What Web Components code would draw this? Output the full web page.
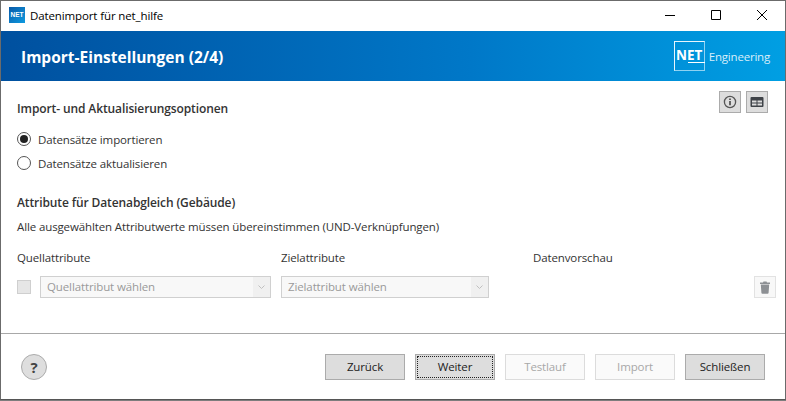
<!DOCTYPE html>
<html lang="de">
<head>
<meta charset="utf-8">
<title>Datenimport</title>
<style>
  html, body { margin: 0; height: 100%; background: #7d7d7d; }
  body { font: 11.5px "Open Sans", "Noto Sans", sans-serif; letter-spacing: -0.12px; color: #333; overflow: hidden; }
</style>
</head>
<body>
<import-window>
  <title-bar slot="titlebar">Datenimport für net_hilfe</title-bar>
  <banner-header slot="banner">Import-Einstellungen (2/4)</banner-header>

  <section-title slot="content" top="20">
    Import- und Aktualisierungsoptionen
    <tool-button slot="tools" icon="info"></tool-button>
    <tool-button slot="tools" icon="table"></tool-button>
  </section-title>
  <radio-option slot="content" checked style="margin-top:10px">Datensätze importieren</radio-option>
  <radio-option slot="content">Datensätze aktualisieren</radio-option>

  <section-title slot="content" top="20">Attribute für Datenabgleich (Gebäude)</section-title>
  <plain-line slot="content">Alle ausgewählten Attributwerte müssen übereinstimmen (UND-Verknüpfungen)</plain-line>
  <mapping-table slot="content"></mapping-table>

  <help-button slot="help"></help-button>
  <push-button slot="buttons">Zurück</push-button>
  <push-button slot="buttons" focused>Weiter</push-button>
  <push-button slot="buttons" disabled>Testlauf</push-button>
  <push-button slot="buttons" disabled>Import</push-button>
  <push-button slot="buttons">Schließen</push-button>
</import-window>

<script>
const ICONS = {
  info: `<svg width="14" height="14" viewBox="0 0 14 14" fill="none"><circle cx="7" cy="7" r="5.6" stroke="#555" stroke-width="1.3"/><path d="M7 6v4.2" stroke="#444" stroke-width="1.6"/><path d="M7 3.6v1.4" stroke="#444" stroke-width="1.6"/></svg>`,
  table: `<svg width="14" height="12" viewBox="0 0 14 12"><path fill="#3f4348" fill-rule="evenodd" d="M1.5 1h11a1 1 0 0 1 1 1v8a1 1 0 0 1-1 1h-11a1 1 0 0 1-1-1V2a1 1 0 0 1 1-1zM2 4.5v2h4.5v-2zm5.5 0v2H12v-2zM2 7.5v2h4.5v-2zm5.5 0v2H12v-2z"/></svg>`,
  trash: `<svg width="12" height="13" viewBox="0 0 12 13"><path fill="#8d9094" d="M1 1.6h3L4.5.6h3l.5 1h3v1.3H1zM1.8 3.6h8.4l-.6 8.2a1 1 0 0 1-1 .9H3.4a1 1 0 0 1-1-.9z"/></svg>`,
  chevron: `<svg width="7" height="4" viewBox="0 0 7 4" fill="none"><path d="M.5.5l3 3 3-3" stroke="#c0c0c0"/></svg>`,
};

class ImportWindow extends HTMLElement {
  constructor() {
    super();
    this.attachShadow({ mode: "open" }).innerHTML = `
      <style>
        :host {
          display: flex;
          flex-direction: column;
          box-sizing: border-box;
          width: 786px;
          height: 400px;
          border: 1px solid #6b6b6b;
          border-bottom: 1px solid #555;
          background: #fff;
        }
        .content { flex: 1; padding: 0 17px 0 16px; min-height: 0; }
        .footer {
          display: flex;
          align-items: center;
          justify-content: space-between;
          height: 66px;
          border-top: 1px solid #a8a8a8;
          padding: 0 20px;
          box-sizing: border-box;
        }
        .buttons { display: flex; gap: 10px; }
      </style>
      <slot name="titlebar"></slot>
      <slot name="banner"></slot>
      <div class="content"><slot name="content"></slot></div>
      <div class="footer">
        <slot name="help"></slot>
        <div class="buttons"><slot name="buttons"></slot></div>
      </div>`;
  }
}

class TitleBar extends HTMLElement {
  constructor() {
    super();
    this.attachShadow({ mode: "open" }).innerHTML = `
      <style>
        :host {
          display: flex;
          align-items: center;
          box-sizing: border-box;
          height: 30px;
          padding-bottom: 2px;
          color: #000;
        }
        .logo {
          width: 16px; height: 16px;
          margin: 0 5px 0 8px;
          background: linear-gradient(135deg, #0a5aa8, #0d9ae0);
          color: #fff;
          font: bold 6.5px/16px "Liberation Sans", sans-serif;
          text-align: center;
          letter-spacing: 0;
        }
        .text { flex: 1; }
        .ctl { width: 46px; display: flex; align-items: center; justify-content: center; }
      </style>
      <span class="logo">NET</span>
      <span class="text"><slot></slot></span>
      <span class="ctl"><svg width="10" height="10" viewBox="0 0 10 10"><path d="M0 5.5h10" stroke="#000"/></svg></span>
      <span class="ctl"><svg width="10" height="10" viewBox="0 0 10 10"><path d="M.5.5h9v9h-9z" fill="none" stroke="#000"/></svg></span>
      <span class="ctl"><svg width="10" height="10" viewBox="0 0 10 10"><path d="M0 0l10 10M10 0L0 10" stroke="#000" stroke-width="1"/></svg></span>`;
  }
}

class BannerHeader extends HTMLElement {
  constructor() {
    super();
    this.attachShadow({ mode: "open" }).innerHTML = `
      <style>
        :host {
          display: flex;
          align-items: center;
          justify-content: space-between;
          height: 50px;
          padding: 0 15px 0 20px;
          color: #fff;
          background: linear-gradient(90deg, #00509f 0%, #0078c8 60%, #009fe3 100%);
        }
        .title { font-size: 15.5px; font-weight: 700; letter-spacing: 0; padding-top: 1px; }
        .brand { display: flex; align-items: center; gap: 4px; }
        .box {
          position: relative;
          box-sizing: border-box;
          width: 31px; height: 30px;
          border: 1px solid;
          border-color: #e8f5fc #8fd2f2 #8fd2f2 #e8f5fc;
          font: 700 13.5px/27px "Open Sans", sans-serif;
          letter-spacing: 0;
          text-align: center;
        }
        .box::after {
          content: "";
          position: absolute;
          right: -1px; bottom: 7px;
          width: 17px; height: 1px;
          background: #fff;
        }
        .eng { color: #d8eefa; letter-spacing: -0.2px; }
      </style>
      <span class="title"><slot></slot></span>
      <span class="brand"><span class="box">NET</span><span class="eng">Engineering</span></span>`;
  }
}

class SectionTitle extends HTMLElement {
  constructor() {
    super();
    this.attachShadow({ mode: "open" }).innerHTML = `
      <style>
        :host {
          display: block;
          position: relative;
          font-size: 12px;
          font-weight: 600;
          letter-spacing: -0.11px;
          line-height: 16px;
          color: #333;
        }
        .tools { position: absolute; right: 0; top: 10px; display: flex; gap: 5px; }
      </style>
      <slot></slot>
      <div class="tools"><slot name="tools"></slot></div>`;
  }
  connectedCallback() {
    this.style.paddingTop = this.getAttribute("top") + "px";
  }
}

class ToolButton extends HTMLElement {
  constructor() {
    super();
    this.attachShadow({ mode: "open" }).innerHTML = `
      <style>
        :host {
          display: flex;
          align-items: center;
          justify-content: center;
          box-sizing: border-box;
          width: 22px; height: 22px;
          background: #dddddd;
          border: 1px solid #ababab;
        }
        :host([ghost]) { background: #f8f8f8; border-color: #e2e2e2; }
      </style>
      <span id="i" style="display:flex"></span>`;
  }
  connectedCallback() {
    this.shadowRoot.getElementById("i").innerHTML = ICONS[this.getAttribute("icon")];
  }
}

class RadioOption extends HTMLElement {
  constructor() {
    super();
    this.attachShadow({ mode: "open" }).innerHTML = `
      <style>
        :host {
          display: flex;
          align-items: center;
          gap: 7px;
          height: 24px;
          color: #333;
        }
        .dot {
          box-sizing: border-box;
          width: 14px; height: 14px;
          border: 1px solid #555;
          border-radius: 50%;
          display: flex; align-items: center; justify-content: center;
        }
        :host([checked]) .dot::after {
          content: "";
          width: 8px; height: 8px;
          border-radius: 50%;
          background: #222;
        }
      </style>
      <span class="dot"></span><slot></slot>`;
  }
}

class PlainLine extends HTMLElement {
  constructor() {
    super();
    this.attachShadow({ mode: "open" }).innerHTML = `
      <style>:host { display: block; line-height: 16px; margin-top: 8px; color: #333; }</style>
      <slot></slot>`;
  }
}

class SelectBox extends HTMLElement {
  constructor() {
    super();
    this.attachShadow({ mode: "open" }).innerHTML = `
      <style>
        :host {
          display: flex;
          box-sizing: border-box;
          height: 22px;
          border: 1px solid #d0d0d0;
          background: #f8f8f8;
          color: #9a9a9a;
          line-height: 20px;
        }
        .v { flex: 1; padding-left: 6px; }
        .c { width: 17px; background: #f0f0f0; display: flex; align-items: center; justify-content: center; }
      </style>
      <span class="v"><slot></slot></span>
      <span class="c">${ICONS.chevron}</span>`;
  }
}

class MappingTable extends HTMLElement {
  constructor() {
    super();
    this.attachShadow({ mode: "open" }).innerHTML = `
      <style>
        :host {
          display: grid;
          grid-template-columns: 23px 241px 208px 1fr 22px;
          margin-top: 15px;
          margin-right: -8px;
          line-height: 16px;
          color: #333;
        }
        .h1 { grid-column: 1 / 3; }
        .h3 { grid-column: 4 / 6; padding-left: 44px; }
        .r { margin-top: 10px; display: flex; align-items: center; }
        .check { box-sizing: border-box; width: 14px; height: 14px; background: #e6e6e6; border: 1px solid #cfcfcf; }
      </style>
      <span class="h1">Quellattribute</span>
      <span>Zielattribute</span>
      <span class="h3">Datenvorschau</span>
      <span class="r"><span class="check"></span></span>
      <span class="r"><select-box style="width:231px">Quellattribut wählen</select-box></span>
      <span class="r"><select-box style="width:208px">Zielattribut wählen</select-box></span>
      <span class="r"></span>
      <span class="r"><tool-button ghost icon="trash"></tool-button></span>`;
  }
}

class HelpButton extends HTMLElement {
  constructor() {
    super();
    this.attachShadow({ mode: "open" }).innerHTML = `
      <style>
        :host {
          display: flex;
          align-items: center;
          justify-content: center;
          box-sizing: border-box;
          width: 26px; height: 26px;
          border-radius: 50%;
          background: #dedede;
          border: 1px solid #ababab;
          font: 700 15px "Open Sans", sans-serif;
          color: #444;
        }
      </style>?`;
  }
}

class PushButton extends HTMLElement {
  constructor() {
    super();
    this.attachShadow({ mode: "open" }).innerHTML = `
      <style>
        :host {
          display: flex;
          align-items: center;
          justify-content: center;
          position: relative;
          box-sizing: border-box;
          width: 80px; height: 26px;
          background: #dddddd;
          border: 1px solid #ababab;
          color: #222;
        }
        :host([disabled]) { background: #fafafa; border-color: #dcdcdc; color: #a8a8a8; }
        :host([focused])::after {
          content: "";
          position: absolute;
          inset: 1px;
          border: 1px dotted #222;
        }
      </style>
      <slot></slot>`;
  }
}

customElements.define("import-window", ImportWindow);
customElements.define("title-bar", TitleBar);
customElements.define("banner-header", BannerHeader);
customElements.define("section-title", SectionTitle);
customElements.define("tool-button", ToolButton);
customElements.define("radio-option", RadioOption);
customElements.define("plain-line", PlainLine);
customElements.define("select-box", SelectBox);
customElements.define("mapping-table", MappingTable);
customElements.define("help-button", HelpButton);
customElements.define("push-button", PushButton);
</script>
</body>
</html>
